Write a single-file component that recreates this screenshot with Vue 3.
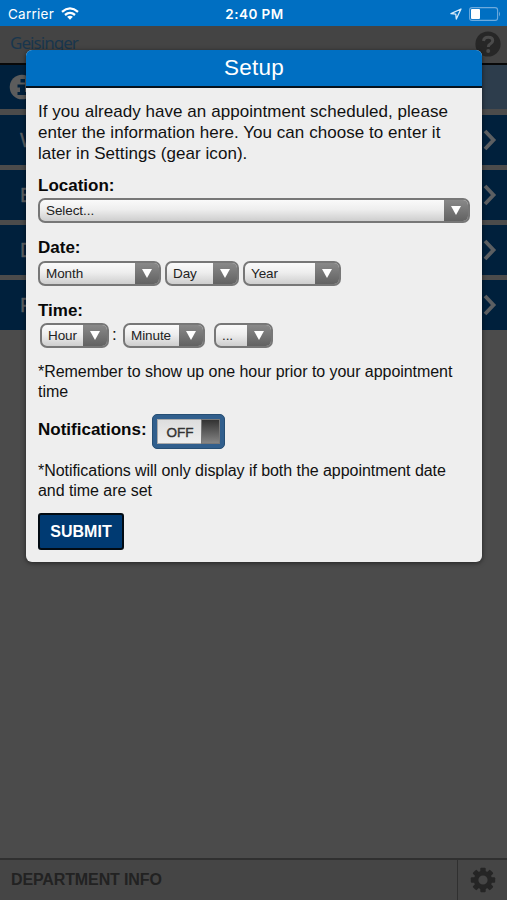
<script setup>
const rows = ['W', 'E', 'D', 'P']
const dateFields = [
  { label: 'Month', size: 'month' },
  { label: 'Day', size: 'day' },
  { label: 'Year', size: 'year' },
]
</script>

<template>
  <div class="screen">
    <header class="status">
      <div class="carrier">
        <span class="carrier-name">Carrier</span>
        <svg width="18" height="13" viewBox="0 0 18 13" fill="none" stroke="#fff" stroke-width="2.3">
          <path d="M1 4.8Q9-2 17 4.8" />
          <path d="M4 8Q9 3.8 14 8" />
          <path d="M6.1 9.8Q9 7.5 11.9 9.8L9 12.8Z" fill="#fff" stroke="none" />
        </svg>
      </div>
      <span class="clock">2:40 PM</span>
      <div class="indicators">
        <svg width="12" height="12" viewBox="0 0 12 12" fill="none" stroke="#d8ebfa" stroke-width="1.3" stroke-linejoin="round">
          <path d="M11 1L1 5.7L5.8 6.2L6.3 11Z" />
        </svg>
        <svg width="32" height="14" viewBox="0 0 32 14">
          <rect x=".6" y=".6" width="28" height="12.8" rx="2.5" fill="none" stroke="#6eabdd" stroke-width="1.1" />
          <rect x="2" y="2" width="9" height="10" rx="1" fill="#fff" />
          <path d="M30 4.5Q32 7 30 9.5Z" fill="#6eabdd" />
        </svg>
      </div>
    </header>

    <div class="brand">
      <span class="brand-name">Geisinger</span>
      <svg width="26" height="26" viewBox="0 0 26 26">
        <circle cx="13" cy="13" r="12.6" fill="#272727" />
        <path d="M8.5 10Q9 6.2 13.2 6.2Q17.7 6.2 17.7 9.7Q17.7 11.6 15.2 13Q13.3 14 13.3 16" fill="none" stroke="#4b4b4b" stroke-width="3" />
        <circle cx="13.2" cy="20" r="2" fill="#4b4b4b" />
      </svg>
    </div>

    <main class="list">
      <div class="row info">
        <svg width="26" height="26" viewBox="0 0 26 26">
          <circle cx="13" cy="13" r="12.3" fill="#5c5c5c" />
          <path d="M11.5 5h4.5v3.5h-4.5zM8.5 10.5h7.5v7.5h2v3h-9.5v-3h2.5v-4.5h-2.5z" fill="#00203c" />
        </svg>
      </div>
      <div v-for="r in rows" :key="r" class="row">
        <span>{{ r }}</span>
        <svg width="14" height="22" viewBox="0 0 14 22" fill="none" stroke="#5c5f62" stroke-width="3.8">
          <path d="M2 2L10.5 11L2 20" />
        </svg>
      </div>
    </main>

    <footer class="footer">
      <span class="dept">DEPARTMENT INFO</span>
      <div class="gear">
        <svg width="26" height="26" viewBox="-13 -13 26 26">
          <g fill="#252525">
            <rect v-for="n in 8" :key="n" x="-2.7" y="-12.2" width="5.4" height="6" rx="1" :transform="`rotate(${n * 45})`" />
          </g>
          <circle r="6.9" fill="none" stroke="#252525" stroke-width="4.6" />
        </svg>
      </div>
    </footer>

    <section class="modal">
      <h1 class="title">Setup</h1>
      <div class="body">
        <p class="intro">If you already have an appointment scheduled, please<br>enter the information here. You can choose to enter it<br>later in Settings (gear icon).</p>

        <div class="label">Location:</div>
        <div class="fields">
          <div class="select location"><span>Select...</span><i><svg width="10" height="9" viewBox="0 0 10 9"><path d="M0 0H10L5 9Z" fill="#fff" /></svg></i></div>
        </div>

        <div class="label">Date:</div>
        <div class="fields">
          <div v-for="f in dateFields" :key="f.size" class="select" :class="f.size"><span>{{ f.label }}</span><i><svg width="10" height="9" viewBox="0 0 10 9"><path d="M0 0H10L5 9Z" fill="#fff" /></svg></i></div>
        </div>

        <div class="label">Time:</div>
        <div class="fields time">
          <div class="select hour"><span>Hour</span><i><svg width="10" height="9" viewBox="0 0 10 9"><path d="M0 0H10L5 9Z" fill="#fff" /></svg></i></div>
          <b class="colon">:</b>
          <div class="select minute"><span>Minute</span><i><svg width="10" height="9" viewBox="0 0 10 9"><path d="M0 0H10L5 9Z" fill="#fff" /></svg></i></div>
          <div class="select period"><span>...</span><i><svg width="10" height="9" viewBox="0 0 10 9"><path d="M0 0H10L5 9Z" fill="#fff" /></svg></i></div>
        </div>

        <p class="note">*Remember to show up one hour prior to your appointment<br>time</p>

        <div class="notify">
          <span class="notify-label">Notifications:</span>
          <div class="toggle"><span>OFF</span><i></i></div>
        </div>

        <p class="note second">*Notifications will only display if both the appointment date<br>and time are set</p>
        <button class="submit">SUBMIT</button>
      </div>
    </section>
  </div>
</template>

<style>
body { margin: 0; }
</style>

<style scoped>
* { box-sizing: border-box; }
.screen {
  position: relative;
  width: 507px;
  height: 900px;
  overflow: hidden;
  display: flex;
  flex-direction: column;
  background: #4b4b4b;
  font-family: "Liberation Sans", Arial, sans-serif;
  color: #111;
}
.status {
  height: 26px;
  flex: none;
  display: grid;
  grid-template-columns: 1fr auto 1fr;
  align-items: center;
  padding: 1px 6px 0 8px;
  background: #006fc2;
  color: #fff;
  font: 13.5px/24px Inter, sans-serif;
}
.carrier { display: flex; align-items: center; gap: 7px; }
.carrier-name { letter-spacing: .25px; }
.clock { font-weight: 600; letter-spacing: .45px; }
.indicators { display: flex; justify-content: flex-end; align-items: center; gap: 7px; }
.brand {
  height: 39px;
  flex: none;
  display: flex;
  justify-content: space-between;
  padding: 5px 6px 0 10px;
  background: #444;
  border-bottom: 2px solid #080808;
}
.brand-name { font: 17px/23px "Noto Sans", sans-serif; letter-spacing: -.95px; color: #19364d; }
.list { display: flex; flex-direction: column; gap: 5px; background: #4b4b4b; }
.row {
  height: 50px;
  display: flex;
  align-items: center;
  justify-content: space-between;
  padding: 0 10px 0 20px;
  background: #00203c;
  color: #5c5f62;
  font-size: 20px;
}
.row span { -webkit-text-stroke: .4px #5c5f62; }
.info { height: 44px; padding-left: 9px; margin-bottom: 1px; background: linear-gradient(90deg, #00203c 0 50%, #2d3d4c 50%); }
.footer {
  margin-top: auto;
  height: 42px;
  display: flex;
  border-top: 2px solid #303030;
  background: #454545;
}
.dept { flex: 1; padding-left: 11px; font: bold 16px/40px "Liberation Sans", Arial, sans-serif; color: #222; letter-spacing: -.12px; }
.gear { width: 50px; border-left: 1px solid #303030; display: flex; align-items: center; justify-content: center; }
.modal {
  position: absolute;
  left: 26px;
  top: 50px;
  width: 456px;
  height: 512px;
  border-radius: 6px;
  overflow: hidden;
  background: #eee;
  box-shadow: 0 1px 5px rgba(0, 0, 0, .55);
}
.title {
  margin: 0;
  height: 38px;
  border-bottom: 2px solid #06121c;
  background: #006fc2;
  color: #fff;
  text-align: center;
  font-size: 22.5px;
  letter-spacing: .2px;
  font-weight: 400;
  line-height: 36px;
}
.body { padding: 13px 12px 0; display: flex; flex-direction: column; white-space: nowrap; }
p { margin: 0; }
.intro { font-size: 17px; line-height: 21px; height: 63px; letter-spacing: .05px; }
.label { margin-top: 11px; height: 22px; font-size: 17px; font-weight: bold; line-height: 22px; color: #080808; }
.fields { height: 25px; display: flex; gap: 4px; margin-top: 1px; }
.fields + .label { margin-top: 14px; height: 23px; }
.fields + .label + .time { margin-top: 0; }
.select {
  height: 25px;
  display: flex;
  border: 2px solid #777;
  border-radius: 7px;
  overflow: hidden;
  background: linear-gradient(#fafafa, #eee 45%, #cecece);
  font-size: 13.5px;
  letter-spacing: -.08px;
  color: #222;
}
.select span { flex: 1; padding-left: 6px; line-height: 22px; }
.select i { width: 24px; display: flex; align-items: center; justify-content: center; padding-bottom: 1px; background: linear-gradient(#898989, #626262); }
.location { width: 432px; }
.month { width: 123px; }
.day { width: 74px; }
.year { width: 98px; }
.time { padding-left: 2px; gap: 0; }
.hour { width: 69px; }
.colon { width: 14px; padding-left: 3px; font-size: 17px; line-height: 23px; font-weight: 400; }
.minute { width: 82px; }
.period { width: 59px; margin-left: 9px; }
.note { margin-top: 14px; font-size: 16px; line-height: 20px; height: 40px; letter-spacing: -.05px; }
.notify { display: flex; height: 35px; margin-top: 12px; }
.notify-label { width: 114px; font-size: 17px; font-weight: bold; line-height: 32px; color: #080808; }
.toggle { width: 73px; height: 35px; padding: 4px; border: 1px solid #264e73; border-radius: 5px; background: #315f8d; display: flex; }
.toggle span { width: 44px; padding-left: 1px; border: 1px solid #aaa; border-right: 0; background: linear-gradient(#ddd, #eee); text-align: center; font-size: 13.5px; line-height: 25px; color: #333; -webkit-text-stroke: .4px #333; }
.toggle i { flex: 1; border: 1px solid #777; background: linear-gradient(#333, #858585); }
.second { margin-top: 12px; }
.submit { width: 86px; height: 37px; margin-top: 12px; padding: 0; border: 2px solid #020b13; border-radius: 3px; background: #003a72; color: #fff; font: bold 16px/32px "Liberation Sans", Arial, sans-serif; }
</style>
